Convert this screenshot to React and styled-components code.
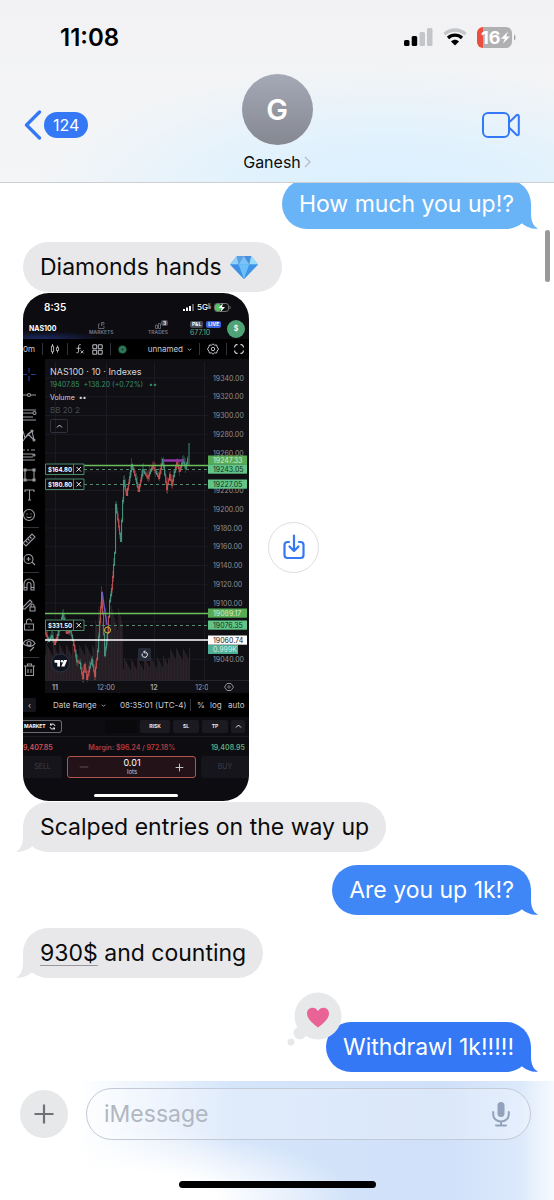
import React from "react";
import styled, { createGlobalStyle, css } from "styled-components";

const GlobalStyle = createGlobalStyle`
* { box-sizing: border-box; }
body {
margin: 0;
background: #fff;
font-family: Inter, "Liberation Sans", sans-serif;
color: #0b0b0c;
}
button {
margin: 0;
padding: 0;
border: 0;
background: none;
font: inherit;
color: inherit;
}
svg { display: block; flex: none; }
p { margin: 0; }
`

const Screen = styled.div`
display: flex;
flex-direction: column;
min-height: 100vh;
`

const Header = styled.header`
position: sticky;
top: 0;
z-index: 2;
border-bottom: 1px solid #cbcfd4;
background:
  radial-gradient(ellipse 64% 70% at 70% 106%, #d9effe 0%, #e2f2fd 45%, rgba(240, 243, 247, 0) 100%),
  linear-gradient(#f2f2f4, #f4f5f6);
`

const StatusBar = styled.div`
display: flex;
align-items: center;
justify-content: space-between;
height: 74px;
padding: 0 38px 0 60px;
`

const Time = styled.span`
font-size: 24px;
font-weight: 600;
color: #000;
`

const StatusIcons = styled.div`
display: flex;
align-items: center;
gap: 10px;
`

const NavBar = styled.div`
display: grid;
grid-template-columns: 1fr auto 1fr;
height: 108px;
padding: 0 24px;
`

const Back = styled.button`
display: flex;
align-items: center;
justify-self: start;
gap: 2px;
height: 101px;
`

const Badge = styled.span`
padding: 0 9px;
border-radius: 13px;
background: #3478f6;
color: #fff;
font-size: 16px;
line-height: 26px;
`

const Contact = styled.button`
display: flex;
flex-direction: column;
align-items: center;
gap: 7px;
`

const Avatar = styled.span`
display: flex;
align-items: center;
justify-content: center;
width: 71px;
height: 71px;
border-radius: 50%;
background: linear-gradient(#a5a9b7, #858891);
color: #fff;
font-size: 29px;
font-weight: 600;
`

const ContactName = styled.span`
display: flex;
align-items: center;
gap: 3px;
font-size: 16px;
line-height: 20px;
`

const VideoCall = styled.button`
display: flex;
align-items: center;
justify-self: end;
height: 101px;
padding-right: 10px;
`

const Thread = styled.main`
position: relative;
flex: 1;
display: flex;
flex-direction: column;
align-items: flex-start;
gap: 13px;
margin-top: -4px;
padding: 0 23px 9px;
`

const Group = styled.div`
display: flex;
flex-direction: column;
align-items: flex-start;
gap: 1px;
`

const BubbleBox = styled.div`
position: relative;
padding: 1px 17px 0;
border-radius: 25px;
background: ${p => p.$color};
color: ${p => (p.$mine ? "#fff" : "#0b0b0c")};
font-size: 23px;
line-height: 49px;
${p => p.$mine && css`align-self: flex-end;`}
${p => p.$spaced && css`margin-top: 31px;`}
`

const TailShape = styled.svg`
position: absolute;
bottom: 0;
${p => (p.$mine ? "right: -7px;" : "left: -7px; transform: scaleX(-1);")}
`

const Line = styled.p`
display: flex;
align-items: center;
gap: 8px;
padding-right: 7px;
`

const Amount = styled.a`
color: inherit;
text-decoration: underline;
text-decoration-color: #98989c;
text-decoration-thickness: 1px;
text-underline-offset: 4px;
`

const Tapback = styled.svg`
position: absolute;
left: -39px;
top: -31px;
`

const AttachmentRow = styled.div`
display: flex;
align-items: center;
gap: 19px;
`

const SaveButton = styled.button`
display: flex;
align-items: center;
justify-content: center;
width: 51px;
height: 51px;
border: 1px solid #dedee1;
border-radius: 50%;
`

const ScrollThumb = styled.div`
position: absolute;
right: 4px;
top: 51px;
width: 5px;
height: 52px;
border-radius: 3px;
background: #98989a;
`

const Footer = styled.footer`
position: sticky;
bottom: 0;
display: flex;
flex-direction: column;
align-items: center;
justify-content: space-between;
height: 119px;
padding: 7px 0 12px;
background:
  linear-gradient(90deg, rgba(255, 255, 255, 0) 94%, rgba(255, 255, 255, .7)),
  radial-gradient(ellipse 42% 60% at 22% 100%, #fff 40%, rgba(255, 255, 255, 0) 100%),
  linear-gradient(90deg, #fff 14%, #d5e5fa 42%, #cfe0f9 80%, #e2edfc 100%);
`

const Composer = styled.form`
display: flex;
align-items: center;
gap: 18px;
width: 100%;
padding: 0 23px 0 20px;
`

const AddButton = styled.button`
display: flex;
align-items: center;
justify-content: center;
flex: none;
width: 48px;
height: 48px;
border-radius: 50%;
background: #e7e8ea;
`

const Field = styled.div`
display: flex;
align-items: center;
flex: 1;
height: 52px;
padding: 0 20px 0 17px;
border: 1px solid #c3cad5;
border-radius: 26px;
background: rgba(255, 255, 255, .25);
`

const Input = styled.input`
flex: 1;
min-width: 0;
border: 0;
padding: 0;
outline: 0;
background: none;
font: inherit;
font-size: 23px;
&::placeholder { color: #b1b7c1; opacity: 1; }
`

const HomeBar = styled.div`
width: ${p => p.$width};
height: ${p => p.$height};
border-radius: 4px;
background: ${p => p.$color};
`

/* trading app preview */

const Phone = styled.section`
display: flex;
flex-direction: column;
width: 226px;
border-radius: 26px;
overflow: hidden;
background: #0c0c11;
color: #c9cad0;
font-size: 7px;
line-height: 8px;
white-space: nowrap;
`

const PhoneStatus = styled.div`
display: flex;
align-items: center;
justify-content: space-between;
height: 25px;
padding: 3px 18px 0 21px;
color: #fff;
font-size: 10px;
font-weight: 600;
`

const PhoneIcons = styled.div`
display: flex;
align-items: center;
gap: 3px;
font-size: 8px;
font-weight: 500;
`

const Carrier = styled.span`
display: flex;
align-items: center;
`

const Stack = styled.span`
font-size: 3px;
line-height: 3px;
`

const Tabs = styled.nav`
display: grid;
grid-template-columns: 66px 59px 42px 37px 18px;
align-items: center;
justify-items: start;
height: 21px;
background: radial-gradient(ellipse 60px 8px at 20px 21px, #1c2a63, rgba(12, 12, 17, 0));
`

const Tab = styled.button`
position: relative;
display: flex;
flex-direction: column;
align-items: center;
gap: 1px;
color: #777a83;
font-size: 5px;
line-height: 5px;
font-weight: 600;
${p => p.$active && css`
padding-left: 6px;
color: #fff;
font-size: 7px;
line-height: 8px;
font-weight: 700;
`}
`

const Count = styled.span`
position: absolute;
right: 0;
top: -2px;
padding: 0 2px;
border-radius: 2px;
background: #4a4c55;
color: #fff;
line-height: 6px;
`

const Pnl = styled.div`
display: flex;
flex-direction: column;
gap: 1px;
color: #5fae7d;
`

const Tags = styled.div`
display: flex;
gap: 3px;
`

const Tag = styled.span`
padding: 0 2px;
border-radius: 2px;
background: ${p => p.$color};
color: #fff;
font-size: 5px;
line-height: 7px;
font-weight: 700;
`

const User = styled.span`
width: 18px;
height: 18px;
border-radius: 50%;
background: #4fa477;
color: #fff;
line-height: 18px;
font-weight: 600;
text-align: center;
`

const Toolbar = styled.div`
display: flex;
align-items: center;
gap: 7px;
height: 20px;
padding-right: 5px;
background: #000;
font-size: 8px;
`

const Split = styled.span`
width: 1px;
height: 12px;
background: #33343b;
`

const Picker = styled.button`
display: flex;
align-items: center;
gap: 4px;
${p => p.$end && css`margin-left: auto;`}
`

const Workspace = styled.div`
display: flex;
background: #000;
`

const Tools = styled.div`
display: flex;
flex-direction: column;
gap: 4px;
width: 22px;
padding-top: 8px;
color: #9a9ba1;
`

const Tool = styled.button`
display: flex;
align-items: center;
width: 16px;
height: 16px;
${p => p.$active && css`color: #2440a8;`}
`

const Rule = styled.span`
width: 16px;
height: 1px;
background: #33343b;
`

const Chart = styled.div`
position: relative;
background: #0f0f14;
`

const Legend = styled.div`
position: absolute;
left: 5px;
top: 8px;
display: flex;
flex-direction: column;
align-items: flex-start;
gap: 4px;
`

const LegendLine = styled.div`
color: ${p => p.$color};
font-size: ${p => p.$size || "7px"};
line-height: 9px;
`

const Collapse = styled.button`
display: flex;
align-items: center;
justify-content: center;
width: 18px;
height: 14px;
border: 1px solid #303138;
border-radius: 2px;
`

const RangeBar = styled.div`
display: grid;
grid-template-columns: 30px 67px 70px 7px 13px 18px auto;
align-items: center;
height: 24px;
background: #000;
font-size: 8px;
`

const Prev = styled.button`
width: 13px;
height: 14px;
border-radius: 0 2px 2px 0;
background: #15151b;
`

const Orders = styled.div`
display: flex;
align-items: center;
gap: 3px;
height: 20px;
padding-right: 4px;
margin-top: -1px;
`

const Market = styled.button`
display: flex;
align-items: center;
gap: 3px;
height: 13px;
margin-right: auto;
padding: 0 5px 0 1px;
border: 1px solid #6b6c73;
border-left: 0;
border-radius: 0 3px 3px 0;
color: #fff;
font-size: 5px;
font-weight: 700;
`

const Chip = styled.button`
display: flex;
align-items: center;
justify-content: center;
width: ${p => p.$width};
height: 13px;
border-radius: 2px;
background: ${p => (p.$empty ? "#09090c" : "#1a1a20")};
color: #e8e8ea;
font-size: 5px;
font-weight: 700;
`

const Quotes = styled.div`
display: flex;
justify-content: space-between;
height: 20px;
padding: 0 4px 0 0;
border-top: 1px solid #1b1b21;
line-height: 21px;
font-weight: 600;
`

const Quote = styled.span`
color: ${p => p.$color};
`

const Ticket = styled.div`
display: flex;
gap: 5px;
height: 22px;
`

const Side = styled.button`
width: ${p => p.$width};
border-radius: 3px;
background: #15151b;
color: #3f4047;
`

const Lots = styled.div`
display: flex;
align-items: center;
justify-content: space-between;
flex: 1;
padding: 0 11px;
border: 1px solid #b4544f;
border-radius: 3px;
background: #231318;
`

const LotSize = styled.div`
display: flex;
flex-direction: column;
align-items: center;
font-size: 6px;
line-height: 9px;
`

const LotValue = styled.span`
color: #fff;
font-size: 9px;
`

const PhoneFoot = styled.div`
display: flex;
justify-content: center;
padding: 16px 0 4px;
`

const Icon = ({ size = 14, children, ...rest }) => (
  <svg width={size} height={size} viewBox="0 0 14 14" fill="none" stroke="currentColor" strokeWidth="1.100" {...rest}>{children}</svg>
)

const TOOLS = [
  { id: "Crosshair", d: "M6 0v4.500M6 8v5M0 6.500h4M8 6.500h4.500" },
  { id: "Trend line", d: "M0 7h4.500M7.500 7H13M4.500 7a1.500 1.500 0 103 0 1.500 1.500 0 10-3 0" },
  { id: "Fibonacci", d: "M0 2h13M0 5h10M0 9h10M0 12h13M10 5a1.500 1.500 0 103 0 1.500 1.500 0 10-3 0" },
  { id: "Pattern", d: "M0 3l2 7 3-4 4-3 2 9M2 10L0 13M2 10l7-7M5 6l6 6M8 3a1 1 0 102 0 1 1 0 10-2 0M10 12a1 1 0 102 0 1 1 0 10-2 0" },
  { id: "Forecast", d: "M0 2h2m2 0h2m2 0h4M0 6h10M0 9h10M0 12h12M10 7a1 1 0 102 0 1 1 0 10-2 0" },
  { id: "Rectangle", d: "M2 2h9v10H2zM1 1h2v2H1zM10 1h2v2h-2zM1 11h2v2H1zM10 11h2v2h-2z" },
  { id: "Text", d: "M2 4V2h9v2M6.500 2v10M5 12h3" },
  { id: "Emoji", d: "M.5 7a5.500 5.500 0 1011 0 5.500 5.500 0 10-11 0M4 5.500v1M8 5.500v1M3.500 8.500c1 1.500 4 1.500 5 0", last: true },
  { id: "Measure", d: "M0 10l9-9 3 3-9 9zM3 8l1.500 1.500M5 6l1.500 1.500M7 4l1.500 1.500" },
  { id: "Zoom in", d: "M1 6a4.500 4.500 0 109 0 4.500 4.500 0 10-9 0M9 9l3 3M5.500 4v4M3.500 6h4", last: true },
  { id: "Magnet", d: "M1 12V6a5 5 0 0110 0v6H8V6.500a2 2 0 00-4 0V12zM1 9.500h3M8 9.500h3" },
  { id: "Lock drawing", d: "M0 9l7-7 2 2-7 7H0zM7 9h5v4H7zM8 9V7.500a1.500 1.500 0 013 0V9" },
  { id: "Lock", d: "M1.500 6h9v6h-9zM3.500 6V3.500a2.500 2.500 0 015 0M6 8.500v1" },
  { id: "Hide drawings", d: "M0 5.500c3-5 9-5 12 0-3 4-8 4-12 0M4 5.500a2 2 0 104 0 2 2 0 10-4 0M7 13l4-4", last: true },
  { id: "Remove", d: "M1 3h11M2.500 3v9.500h8V3M4.500 3V1h4v2M5 6v4M8 6v4" },
]

// x, y of the turning points of the price
const PRICE = [
  [45, 630], [49, 640], [52, 635], [55, 643], [58, 634], [63, 613], [67, 632], [71, 630], [74, 644], [77, 660],
  [80, 662], [83, 677], [85, 664], [87, 678], [92, 659], [95, 675], [98, 650], [102, 592], [105, 654],
  [108, 632], [110, 600], [112, 588], [115, 552], [116, 504], [121, 540], [124, 480], [127, 494],
  [132, 464], [135, 474], [139, 490], [143, 469], [148, 477], [153, 465], [159, 477], [163, 459],
  [167, 488], [170, 474], [172, 484], [177, 462], [180, 470], [183, 459], [186, 467], [188, 458],
]

const candles = []
PRICE.slice(1).forEach(([x2, y2], i) => {
  const [x1, y1] = PRICE[i]
  for (let x = x1; x < x2; x++) {
    const a = y1 + ((y2 - y1) * (x - x1)) / (x2 - x1)
    const b = y1 + ((y2 - y1) * (x + 1 - x1)) / (x2 - x1)
    const wick = 1 + ((x * 7) % 6)
    const counter = (x * 5) % 4 === 0
    candles.push({ x, top: Math.min(a, b), bottom: Math.max(a, b), wick, up: counter ? y2 > y1 : y2 < y1 })
  }
})

const volumeAt = x => {
  const noise = (x * 37) % 13
  if (x < 95) return 24 + noise
  if (x < 123) return 50 + noise * 2
  if (x < 145) return 10 + noise
  if (x < 168) return 12 + noise
  return 20 + noise
}
const VOLUME = Array.from({ length: 145 }, (_, i) => 45 + i)

const SCALE = Array.from({ length: 16 }, (_, i) => 19340 - i * 20)
const hidden = [19240, 19080, 19060]

const LEVELS = [
  { label: "19247.33", y: 460, fill: "#58ab55", text: "#d5ecd2" },
  { label: "19243.05", y: 469, fill: "#63c487", text: "#123322" },
  { label: "19227.05", y: 484, fill: "#63c487", text: "#123322" },
  { label: "19089.17", y: 613, fill: "#58ab55", text: "#d5ecd2" },
  { label: "19076.35", y: 625, fill: "#63c487", text: "#123322" },
  { label: "19060.74", y: 640, fill: "#ffffff", text: "#16161b" },
]

const POSITIONS = [
  { label: "$164.80", y: 469 },
  { label: "$180.80", y: 484 },
  { label: "$331.50", y: 625 },
]

const PriceChart = () => (
  <svg width="204" height="334" viewBox="45 359 204 334" fontFamily="Inter, sans-serif" fontSize="7">
    <g stroke="#1b1b21" strokeWidth="1">
      {[55, 106, 154, 204].map(x => <path key={x} d={`M${x}.5 362V680`} />)}
      {SCALE.map((s, i) => <path key={s} d={`M45 ${378 + i * 18.75}H208`} />)}
    </g>
    {VOLUME.map(x => (
      <rect key={x} x={x} y={680 - volumeAt(x)} width="1" height={volumeAt(x)} fill={x % 3 ? "#222024" : "#2f2127"} />
    ))}
    {candles.map(({ x, top, bottom, wick, up }, i) => (
      <g key={i} fill={up ? "#47907b" : "#b34b4c"}>
        <rect x={x} y={top} width="1.100" height={bottom - top + 2} />
        <rect x={x + 0.300} y={top - wick} width=".6" height={bottom - top + wick * 2} opacity=".7" />
      </g>
    ))}
    <path d="M189 443v22" stroke="#3f8f76" />
    <path d="M102 592l5 33" stroke="#6a5bc4" strokeWidth="1.500" />
    <path d="M163 460.500h21" stroke="#8e35a8" strokeWidth="2.500" />
    <path d="M45 465.500H208M45 613.500H208" stroke="#6cc05c" strokeWidth="1.500" />
    <path d="M45 640H208" stroke="#fff" strokeWidth="1.500" />
    <path d="M84 469.500H208M84 484.500H208M84 625.500H208" stroke="#5b9a78" strokeWidth=".9" strokeDasharray="3 3" />
    <circle cx="107.500" cy="630" r="3" fill="none" stroke="#c9bd3d" />
    {POSITIONS.map(({ label, y }) => (
      <g key={label}>
        <path d={`M45.5 ${y - 5}h38.500v10.500h-38.500zM73.500 ${y - 5}v10.500`} fill="#0c0c11" stroke="#4b8a69" />
        <text x="48" y={y + 2.500} fill="#fff" fontSize="6" fontWeight="700">{label}</text>
        <path d={`M76.500 ${y - 2}l4.500 4.500m0-4.500l-4.500 4.500`} stroke="#fff" strokeWidth=".9" />
      </g>
    ))}
    <circle cx="60.500" cy="663" r="9" fill="#10141f" stroke="#2b3348" />
    <path d="M54.500 660h5.500v6.500h-2.700v-3.800h-2.800zM64 660h3.200l-2.700 6.500h-3.200z" fill="#fff" />
    <circle cx="62" cy="661.300" r="1.300" fill="#fff" />
    <rect x="138" y="648" width="13" height="13" rx="1.500" fill="#252a38" />
    <path d="M142.300 653.500a2.700 2.700 0 103-1.500h-1.500m1.300-1.500l-1.500 1.500 1.500 1.500" fill="none" stroke="#fff" strokeWidth=".9" />
    {SCALE.map((s, i) => hidden.includes(s) ? null : (
      <text key={s} x="213" y={380.500 + i * 18.75} fill="#8f9096">{`${s}.00`}</text>
    ))}
    {LEVELS.map(({ label, y, fill, text }) => (
      <g key={label}>
        <rect x="208" y={y - 4.500} width="39" height="9.200" fill={fill} />
        <text x="213" y={y + 2.500} fill={text}>{label}</text>
      </g>
    ))}
    <rect x="208" y="645" width="30" height="9" fill="#4fae96" />
    <text x="213" y="652" fill="#d5efe8">0.999K</text>
    <path d="M45 680.500H249" stroke="#24252c" />
    <g fill="#9c9da4" textAnchor="middle">
      <text x="55" y="689.500" fontWeight="700">11</text>
      <text x="106" y="689.500">12:00</text>
      <text x="154" y="689.500" fontWeight="700">12</text>
      <text x="202" y="689.500">12:0</text>
    </g>
    <rect x="208" y="681" width="41" height="12" fill="#0f0f14" />
    <path d="M227 683.500h4l2.500 3.500-2.500 3.500h-4l-2.500-3.500z" fill="none" stroke="#9c9da4" strokeWidth=".9" />
    <circle cx="229" cy="687" r="1.200" fill="none" stroke="#9c9da4" strokeWidth=".7" />
  </svg>
)

const TradingPreview = () => (
  <Phone>
    <PhoneStatus>
      <span>8:35</span>
      <PhoneIcons>
        <svg width="11" height="7" viewBox="0 0 11 7" fill="#fff">
          <path d="M0 5h2v2H0zM3 3.500h2V7H3zM6 2h2v5H6z" />
          <path d="M9 0h2v7H9z" opacity=".35" />
        </svg>
        <Carrier>5G<Stack>U<br />W</Stack></Carrier>
        <svg width="17" height="9" viewBox="0 0 17 9">
          <rect x=".5" y=".5" width="14" height="8" rx="2.500" fill="#111" stroke="#6d6e73" />
          <rect x="1" y="1" width="6" height="7" rx="2" fill="#57c264" />
          <path d="M9 0L4.500 5h3L6.500 9 11 4H8z" fill="#fff" />
          <path d="M16 3v3" stroke="#6d6e73" />
        </svg>
      </PhoneIcons>
    </PhoneStatus>
    <Tabs>
      <Tab $active>NAS100</Tab>
      <Tab>
        <Icon size={7}><path d="M4 4H1v9h11V8M7 8V1M7 1h5v4M10 7V3" strokeWidth="1.500" /></Icon>
        MARKETS
      </Tab>
      <Tab>
        <Icon size={7}><path d="M1 6h4v7H1zM7 3h4v10H7z" strokeWidth="1.500" /></Icon>
        TRADES
        <Count>3</Count>
      </Tab>
      <Pnl>
        <Tags>
          <Tag $color="#4a4c55">P&amp;L</Tag>
          <Tag $color="#3d5fe0">LIVE</Tag>
        </Tags>
        677.10
      </Pnl>
      <User>$</User>
    </Tabs>
    <Toolbar>
      <span>0m</span>
      <Split />
      <Icon size={10}><path d="M2 3h3v8H2zM3.500 0v3M3.500 11v3M9 5h3v4H9zM10.500 2v3M10.500 9v3" strokeWidth="1.200" /></Icon>
      <Split />
      <Icon size={10}><path d="M8 1C5.500 0 5 2 5 4v6c0 2-1 3-3 2M2 6h6M8 9l4 4M12 9l-4 4" strokeWidth="1.300" /></Icon>
      <Icon size={11}><path d="M1 1h5v5H1zM8 1h5v5H8zM1 8h5v5H1zM8 8h5v5H8z" strokeWidth="1.200" /></Icon>
      <Split />
      <Icon size={9}><circle cx="7" cy="7" r="6" fill="#2f7a5a" stroke="#1f5a42" /><circle cx="7" cy="7" r="1.500" fill="#15352a" stroke="none" /></Icon>
      <Picker $end>unnamed <Icon size={5}><path d="M2 5l5 4 5-4" strokeWidth="2" /></Icon></Picker>
      <Split />
      <Icon size={12}><path d="M7 1l1.800 1.500 2.400-.2.600 2.300L13.500 7l-1.700 2.400-.6 2.300-2.400-.2L7 13l-1.800-1.500-2.400.2-.6-2.300L.5 7l1.700-2.400.6-2.300 2.400.2z" /><circle cx="7" cy="7" r="2" /></Icon>
      <Split />
      <Icon size={10}><path d="M1 5V3l2-2h2M9 1h2l2 2v2M13 9v2l-2 2H9M5 13H3l-2-2V9" strokeWidth="1.700" /></Icon>
    </Toolbar>
    <Workspace>
      <Tools>
        {TOOLS.map(({ id, d, last }, i) => (
          <React.Fragment key={id}>
            <Tool aria-label={id} $active={i === 0}><Icon><path d={d} /></Icon></Tool>
            {last && <Rule />}
          </React.Fragment>
        ))}
      </Tools>
      <Chart>
        <PriceChart />
        <Legend>
          <LegendLine $color="#d4d5da" $size="9px">NAS100 · 10 · Indexes</LegendLine>
          <LegendLine $color="#3c8f6b">19407.85 &nbsp;+138.20 (+0.72%) &nbsp; ••</LegendLine>
          <LegendLine $color="#d4d5da">Volume &nbsp;••</LegendLine>
          <LegendLine $color="#4a4b52" $size="8px">BB 20 2</LegendLine>
          <Collapse aria-label="Collapse"><Icon size={7}><path d="M2 9l5-5 5 5" strokeWidth="2" /></Icon></Collapse>
        </Legend>
      </Chart>
    </Workspace>
    <RangeBar>
      <Prev>‹</Prev>
      <Picker>Date Range <Icon size={5}><path d="M2 5l5 4 5-4" strokeWidth="2" /></Icon></Picker>
      <span>08:35:01 (UTC-4)</span>
      <Split />
      <span>%</span>
      <span>log</span>
      <span>auto</span>
    </RangeBar>
    <Orders>
      <Market>MARKET <Icon size={7}><path d="M12 6a5 5 0 00-9-2M2 8a5 5 0 009 2M3 1v3h3M11 13v-3H8" strokeWidth="1.800" /></Icon></Market>
      <Chip $width="32px" $empty aria-label="Volume" />
      <Chip $width="30px">RISK</Chip>
      <Chip $width="26px">SL</Chip>
      <Chip $width="26px">TP</Chip>
      <Chip $width="14px" aria-label="More"><Icon size={7}><path d="M2 9l5-5 5 5" strokeWidth="2" /></Icon></Chip>
    </Orders>
    <Quotes>
      <Quote $color="#d4505a">9,407.85</Quote>
      <Quote $color="#b23b40">Margin: $96.24 / 972.18%</Quote>
      <Quote $color="#5fae7d">19,408.95</Quote>
    </Quotes>
    <Ticket>
      <Side $width="39px">SELL</Side>
      <Lots>
        <Icon size={10}><path d="M1 7h12" stroke="#6d5a5d" strokeWidth="1.200" /></Icon>
        <LotSize><LotValue>0.01</LotValue>lots</LotSize>
        <Icon size={9}><path d="M1 7h12M7 1v12" strokeWidth="1.500" /></Icon>
      </Lots>
      <Side $width="48px">BUY</Side>
    </Ticket>
    <PhoneFoot><HomeBar $width="84px" $height="3px" $color="#fff" /></PhoneFoot>
  </Phone>
)

const Bubble = ({ mine, color = "#e8e8ea", tail = true, spaced, children }) => (
  <BubbleBox $mine={mine} $color={color} $spaced={spaced}>
    {tail && (
      <TailShape $mine={mine} width="18" height="26" viewBox="0 0 18 26" aria-hidden="true">
        <path d="M4 0H11V11C11 18 13.500 23.500 18 25.500C13 26.500 7 24.500 2 20.500Z" fill={color} />
      </TailShape>
    )}
    {children}
  </BubbleBox>
)

const Diamond = () => (
  <svg width="28" height="25" viewBox="0 0 29 26" role="img" aria-label="diamond">
    <path d="M7 1h15l7 9-14.500 15L0 10z" fill="#4ba3ee" />
    <path d="M7 1l2 9H0z" fill="#8fd0fb" />
    <path d="M7 1h7.500L9 10z" fill="#5f9fe0" />
    <path d="M14.500 1L20 10H9z" fill="#79c3f7" />
    <path d="M14.500 1H22l-2 9z" fill="#4a8fdc" />
    <path d="M22 1l7 9h-9z" fill="#9bdcfb" />
    <path d="M0 10h9l5.500 15z" fill="#3e8ee3" />
    <path d="M9 10h11l-5.500 15z" fill="#6cc0f8" />
    <path d="M20 10h9L14.500 25z" fill="#3c93e8" />
  </svg>
)

const App = () => {
  return <Screen>
    <GlobalStyle />
    <Header>
      <StatusBar>
        <Time>11:08</Time>
        <StatusIcons>
          <svg width="29" height="18" viewBox="0 0 29 18">
            <rect x="0" y="12" width="5.500" height="6" rx="1.500" fill="#000" />
            <rect x="7.700" y="8" width="5.500" height="10" rx="1.500" fill="#000" />
            <rect x="15.500" y="4" width="5.500" height="14" rx="1.500" fill="#c4c5c8" />
            <rect x="23" y="0" width="5.500" height="18" rx="1.500" fill="#c4c5c8" />
          </svg>
          <svg width="24" height="18" viewBox="0 0 24 18" fill="none">
            <path d="M1.500 6.200C7.500.6 16.500.6 22.500 6.200" stroke="#c4c5c8" strokeWidth="3.300" />
            <path d="M5 10c4-3.800 10-3.800 14 0" stroke="#000" strokeWidth="3.200" />
            <path d="M8 13.400c2.300-2.100 5.700-2.100 8 0l-4 4.200z" fill="#000" />
          </svg>
          <svg width="39" height="21" viewBox="0 0 39 21">
            <path d="M6.500 0H6a6 6 0 00-6 6v9a6 6 0 006 6h.5z" fill="#eb4e3d" />
            <path d="M6.500 0H29a6 6 0 016 6v9a6 6 0 01-6 6H6.500z" fill="#b0b0b2" />
            <path d="M37 7.500c2 .8 2 5.200 0 6z" fill="#a3a3a6" />
            <text x="4" y="17" fill="#fff" fontFamily="Inter, sans-serif" fontSize="18" fontWeight="700">16</text>
            <path d="M31 4.500L23.800 11.700h4L26 16.500l7-7h-4z" fill="#fff" />
          </svg>
        </StatusIcons>
      </StatusBar>
      <NavBar>
        <Back aria-label="Back, 124 unread">
          <svg width="18" height="30" viewBox="0 0 18 30" fill="none" stroke="#3478f6" strokeWidth="3.300" strokeLinecap="round" strokeLinejoin="round">
            <path d="M15.500 2L2.500 15l13 13" />
          </svg>
          <Badge>124</Badge>
        </Back>
        <Contact>
          <Avatar>G</Avatar>
          <ContactName>
            Ganesh
            <svg width="7" height="12" viewBox="0 0 7 12" fill="none" stroke="#b9bcc2" strokeWidth="1.300">
              <path d="M1 1l5 5-5 5" />
            </svg>
          </ContactName>
        </Contact>
        <VideoCall aria-label="Video call">
          <svg width="38" height="26" viewBox="0 0 38 26" fill="none" stroke="#3478f6" strokeWidth="2" strokeLinejoin="round">
            <rect x="1" y="1" width="26" height="24" rx="5" />
            <path d="M27 10.500l7.500-7.200c1-.9 2.300-.4 2.300.9v17.600c0 1.300-1.300 1.800-2.300.9L27 15.500" />
          </svg>
        </VideoCall>
      </NavBar>
    </Header>
    <Thread>
      <Bubble mine color="#69b3f7">How much you up!?</Bubble>
      <Group>
        <Bubble tail={false}><Line>Diamonds hands <Diamond /></Line></Bubble>
        <AttachmentRow>
          <TradingPreview />
          <SaveButton aria-label="Save">
            <svg width="22" height="26" viewBox="0 0 22 26" fill="none" stroke="#3478f6" strokeWidth="2.200" strokeLinecap="round" strokeLinejoin="round">
              <path d="M6 8H4.500A3 3 0 001.500 11v10a3 3 0 003 3h13a3 3 0 003-3V11a3 3 0 00-3-3H16" />
              <path d="M11 1.500v15M6.500 12.500l4.500 4.500 4.500-4.500" />
            </svg>
          </SaveButton>
        </AttachmentRow>
        <Bubble>Scalped entries on the way up</Bubble>
      </Group>
      <Bubble mine color="#3f86f7">Are you up 1k!?</Bubble>
      <Bubble><Amount href="#">930$</Amount> and counting</Bubble>
      <Bubble mine color="#3478f6" spaced>
        <Tapback width="56" height="56" viewBox="0 0 56 56" role="img" aria-label="Loved">
          <g fill="#e7e8ea">
            <circle cx="31" cy="25" r="23.500" />
            <circle cx="13" cy="42" r="6.500" />
            <circle cx="4" cy="51" r="3.500" />
          </g>
          <path d="M31 36.500C24 31.500 20 27 20 22.500c0-6.500 8-8 11-2.500 3-5.500 11-4 11 2.500 0 4.500-4 9-11 14z" fill="#ea6396" />
        </Tapback>
        Withdrawl 1k!!!!!
      </Bubble>
      <ScrollThumb />
    </Thread>
    <Footer>
      <Composer>
        <AddButton type="button" aria-label="Add">
          <svg width="20" height="20" viewBox="0 0 20 20" stroke="#707176" strokeWidth="2.200">
            <path d="M10 .5v19M.5 10h19" />
          </svg>
        </AddButton>
        <Field>
          <Input placeholder="iMessage" aria-label="iMessage" />
          <svg width="18" height="26" viewBox="0 0 18 26" fill="none" stroke="#93a2bb" strokeWidth="2" strokeLinecap="round">
            <rect x="5.500" y="1" width="7" height="15" rx="3.500" fill="#93a2bb" stroke="none" />
            <path d="M1.200 11v2.500a7.800 7 0 0015.600 0V11M9 20.500V24.500M4 24.500h10" />
          </svg>
        </Field>
      </Composer>
      <HomeBar $width="197px" $height="7px" $color="#000" />
    </Footer>
  </Screen>
}

export default App;
